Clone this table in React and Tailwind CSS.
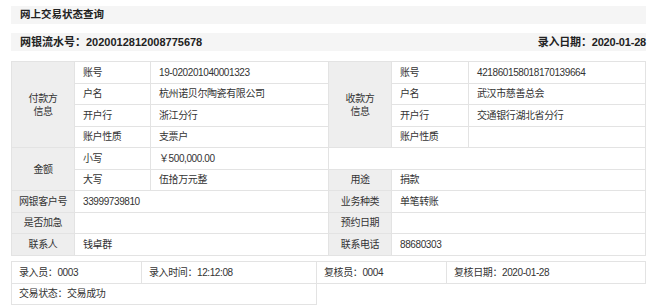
import React from 'react';

const font = { fontFamily: '"Liberation Sans", "Noto Sans CJK SC", sans-serif' };

const td = 'border border-[#e3e3e3] px-[8px] align-middle';
const th = 'border border-[#e3e3e3] bg-[#eeeeee] text-center align-middle';

export default function App() {
  return (
    <div className="w-[650px] h-[307px] bg-white text-[#333] pt-[6px] pl-[11px]" style={font}>
      <div className="w-[635px] h-[18px] bg-[#f5f5f5] flex items-center pl-[9px] text-[10.5px] font-bold text-[#222]">
        网上交易状态查询
      </div>

      <div className="w-[635px] h-[18px] mt-[9px] bg-[#f5f5f5] flex items-center justify-between pl-[9px] text-[11px] font-bold text-[#222]">
        <span>网银流水号：2020012812008775678</span>
        <span className="tracking-[-0.2px]">录入日期：2020-01-28</span>
      </div>

      <table className="mt-[10px] w-[634px] border-collapse table-fixed text-[10px] tracking-[-0.4px]">
        <colgroup>
          <col className="w-[63px]" />
          <col className="w-[76px]" />
          <col className="w-[178px]" />
          <col className="w-[63px]" />
          <col className="w-[77px]" />
          <col className="w-[177px]" />
        </colgroup>
        <tbody>
          <tr className="h-[21.5px]">
            <td rowSpan={4} className={th + ' leading-[13px]'}>付款方<br />信息</td>
            <td className={td}>账号</td>
            <td className={td}>19-020201040001323</td>
            <td rowSpan={4} className={th + ' leading-[13px]'}>收款方<br />信息</td>
            <td className={td}>账号</td>
            <td className={td}>421860158018170139664</td>
          </tr>
          <tr className="h-[21.5px]">
            <td className={td}>户名</td>
            <td className={td}>杭州诺贝尔陶瓷有限公司</td>
            <td className={td}>户名</td>
            <td className={td}>武汉市慈善总会</td>
          </tr>
          <tr className="h-[21.5px]">
            <td className={td}>开户行</td>
            <td className={td}>浙江分行</td>
            <td className={td}>开户行</td>
            <td className={td}>交通银行湖北省分行</td>
          </tr>
          <tr className="h-[21.5px]">
            <td className={td}>账户性质</td>
            <td className={td}>支票户</td>
            <td className={td}>账户性质</td>
            <td className={td}></td>
          </tr>
          <tr className="h-[21.5px]">
            <td rowSpan={2} className={th}>金额</td>
            <td className={td}>小写</td>
            <td className={td}>￥500,000.00</td>
            <td colSpan={3} className={td}></td>
          </tr>
          <tr className="h-[21.5px]">
            <td className={td}>大写</td>
            <td className={td}>伍拾万元整</td>
            <td className={th}>用途</td>
            <td colSpan={2} className={td}>捐款</td>
          </tr>
          <tr className="h-[21.5px]">
            <td className={th}>网银客户号</td>
            <td colSpan={2} className={td}>33999739810</td>
            <td className={th}>业务种类</td>
            <td colSpan={2} className={td}>单笔转账</td>
          </tr>
          <tr className="h-[21.5px]">
            <td className={th}>是否加急</td>
            <td colSpan={2} className={td}></td>
            <td className={th}>预约日期</td>
            <td colSpan={2} className={td}></td>
          </tr>
          <tr className="h-[21.5px]">
            <td className={th}>联系人</td>
            <td colSpan={2} className={td}>钱卓群</td>
            <td className={th}>联系电话</td>
            <td colSpan={2} className={td}>88680303</td>
          </tr>
        </tbody>
      </table>

      <table className="mt-[5px] w-[634px] border-collapse table-fixed text-[10px] tracking-[-0.4px]">
        <colgroup>
          <col className="w-[130px]" />
          <col className="w-[175px]" />
          <col className="w-[130px]" />
          <col className="w-[199px]" />
        </colgroup>
        <tbody>
          <tr className="h-[22px]">
            <td className="border border-[#e3e3e3] px-[7px]">录入员：0003</td>
            <td className="border border-[#e3e3e3] px-[7px]">录入时间：12:12:08</td>
            <td className="border border-[#e3e3e3] px-[7px]">复核员：0004</td>
            <td className="border border-[#e3e3e3] px-[7px]">复核日期：2020-01-28</td>
          </tr>
          <tr className="h-[21px]">
            <td colSpan={2} className="border border-[#e3e3e3] px-[7px]">交易状态：交易成功</td>
          </tr>
        </tbody>
      </table>
    </div>
  );
}
